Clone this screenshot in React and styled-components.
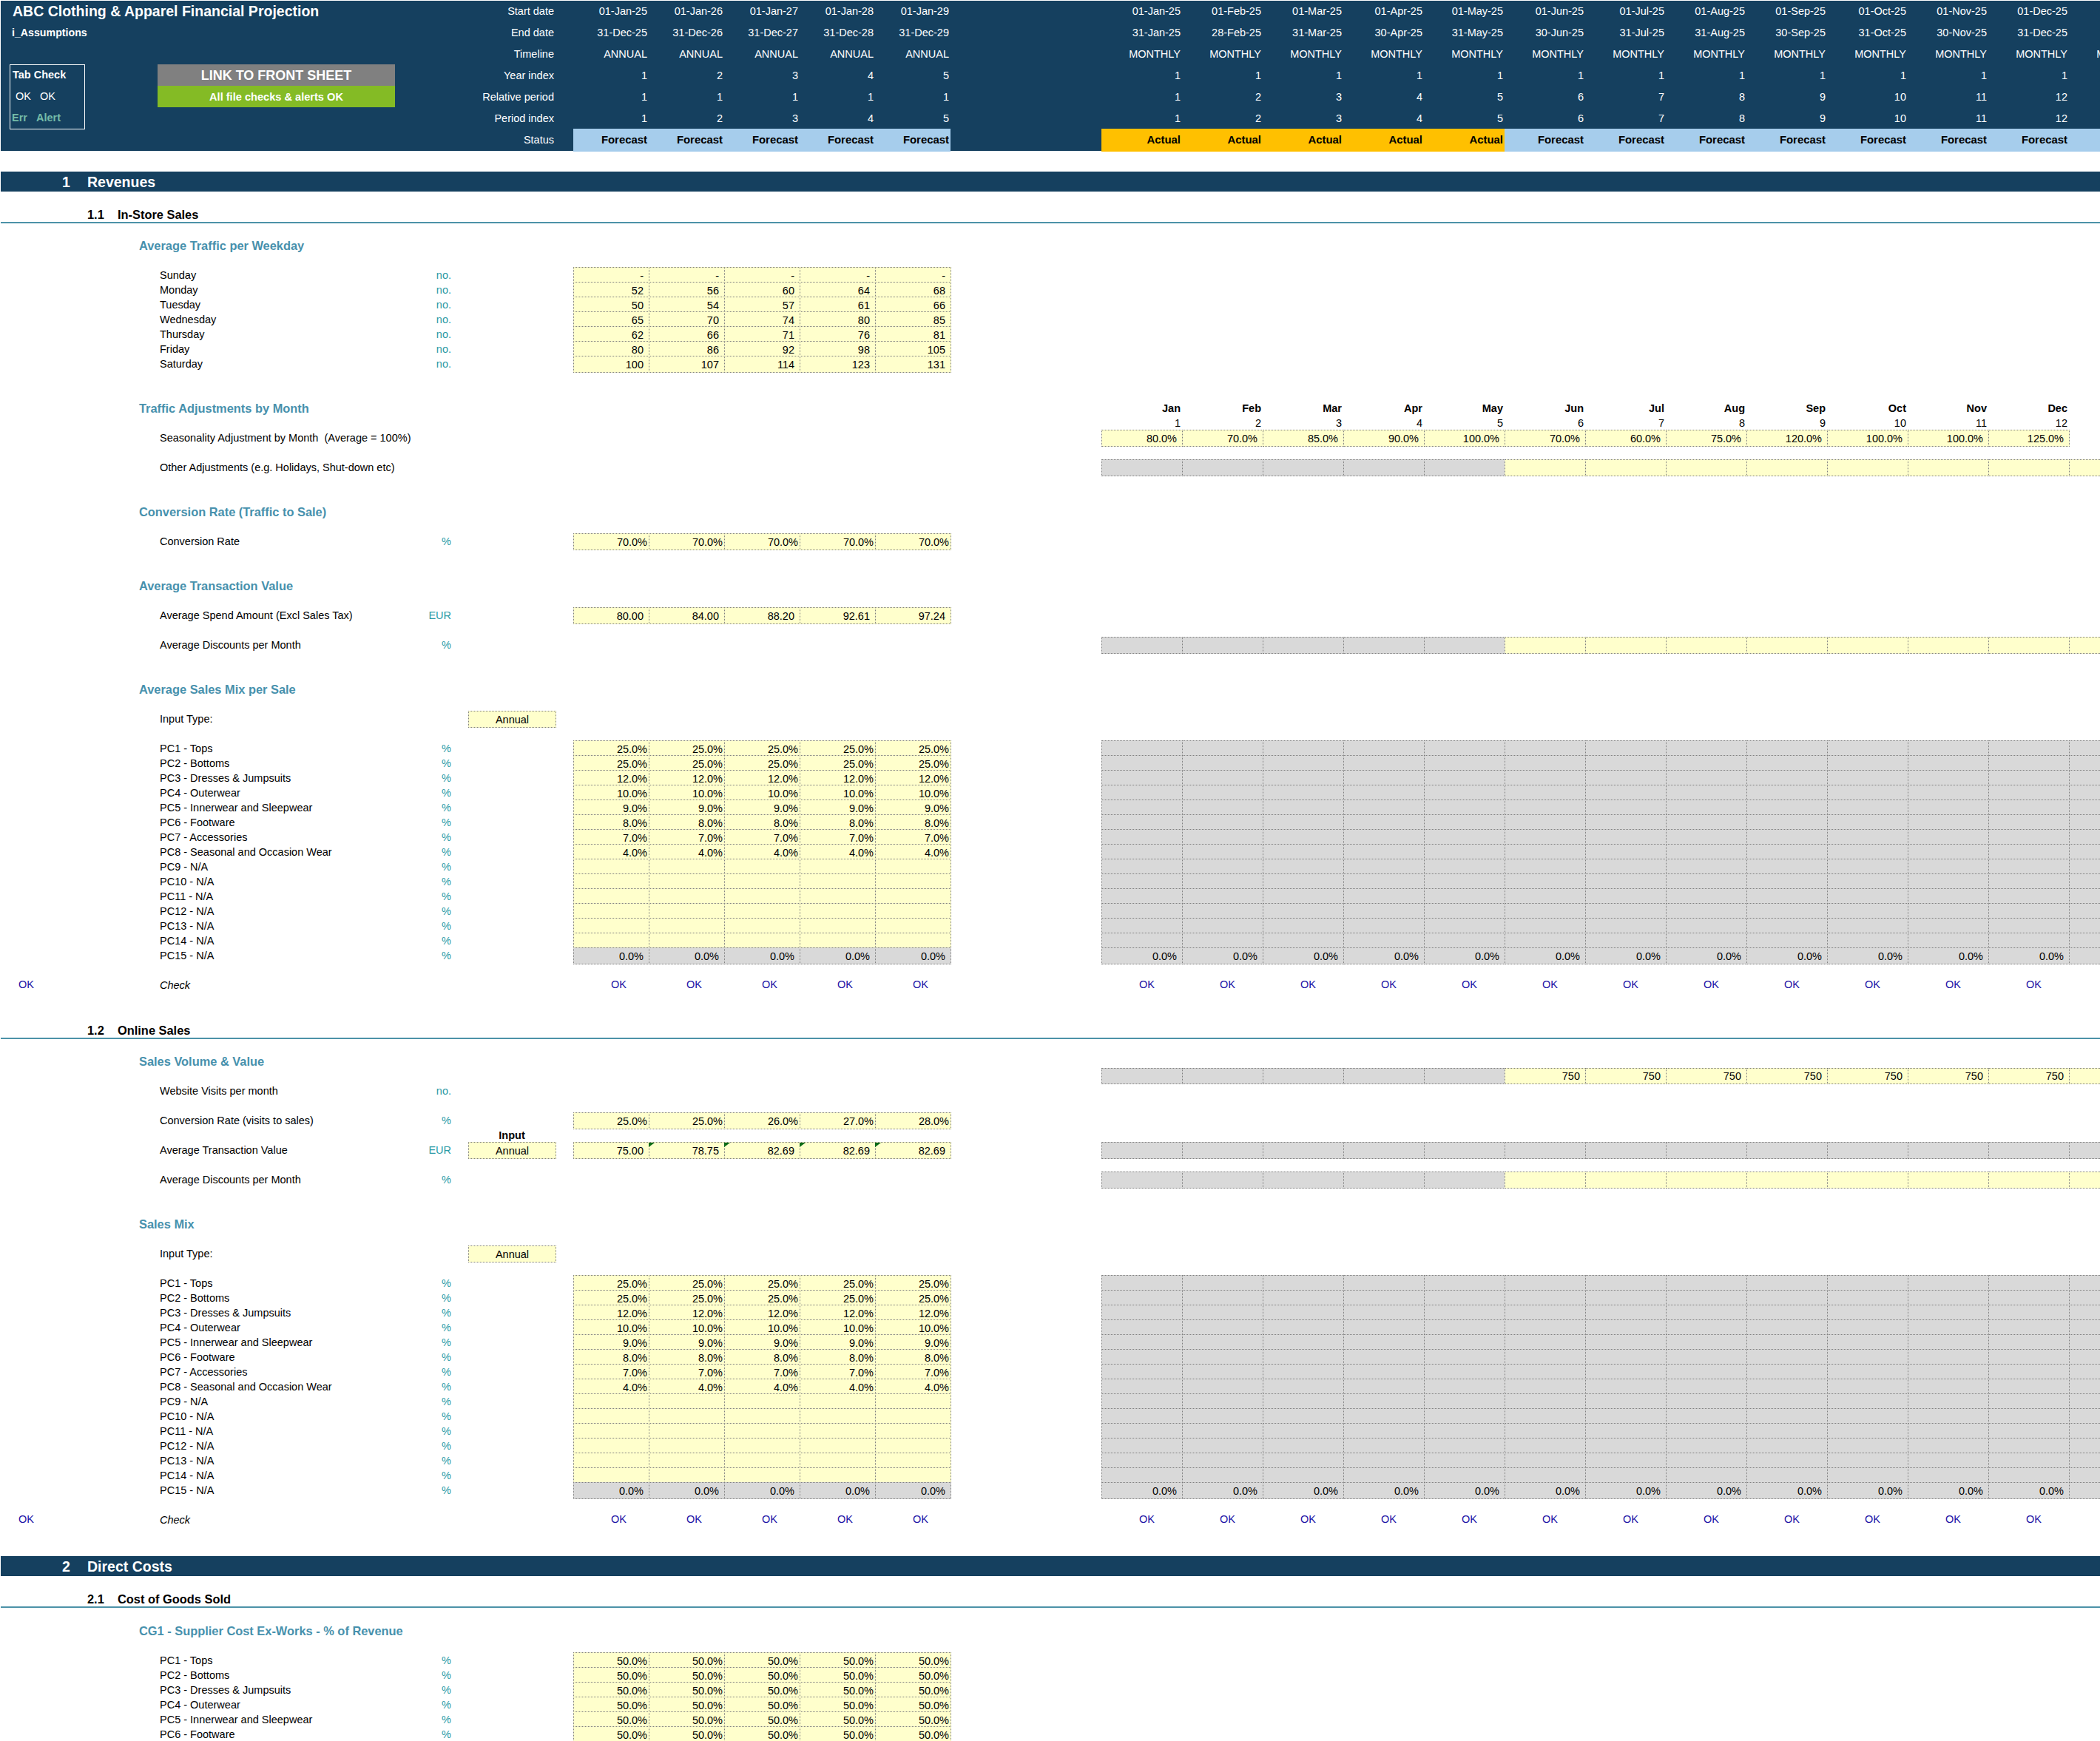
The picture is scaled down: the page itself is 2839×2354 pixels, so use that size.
import React from "react"
import styled, { createGlobalStyle } from "styled-components"

const NAVY = `#15405f`
const TEAL = `#4791ad`
const LINE = `#4c92a8`
const YELLOW = `#ffffcc`
const GREY = `#d9d9d9`

const GlobalStyle = createGlobalStyle`
  html, body {
    margin: 0;
    padding: 0;
    background: #fff;
  }
  body {
    font-family: "Liberation Sans", Arial, sans-serif;
    font-size: 14.5px;
    color: #000;
  }
`

const Page = styled.div`
  width: 2839px;
  height: 2354px;
  padding: 1px 0 0 1px;
  box-sizing: border-box;
  overflow: hidden;
`

const Header = styled.header`
  display: grid;
  grid-template-columns: 632px 2400px;
  width: 3032px;
  height: 203px;
  background: ${NAVY};
  color: #fff;
`

const BrandPane = styled.div`
  display: flex;
  flex-direction: column;
`

const Title = styled.div`
  height: 29px;
  line-height: 29px;
  padding-left: 16px;
  font-size: 19.5px;
  font-weight: 700;
  white-space: nowrap;
`

const SheetName = styled.div`
  height: 29px;
  line-height: 29px;
  padding-left: 15px;
  font-size: 14.2px;
  font-weight: 700;
`

const Controls = styled.div`
  display: flex;
  gap: 98px;
  margin-top: 28px;
  padding-left: 12px;
`

const TabBox = styled.div`
  display: grid;
  grid-template-columns: 33px 1fr;
  grid-auto-rows: 29px;
  align-items: start;
  box-sizing: border-box;
  width: 102px;
  height: 88px;
  padding-left: 2px;
  border: 1px solid #fff;
  line-height: 27px;
`

const TabTitle = styled.div`
  grid-column: 1 / 3;
  padding-left: 1px;
  font-weight: 700;
`

const TabOk = styled.div`
  padding-left: 5px;
`

const TabFlag = styled.div`
  color: #74bba8;
  font-weight: 700;
`

const LinkBlock = styled.div`
  display: flex;
  flex-direction: column;
  width: 321px;
  height: 58px;
  text-align: center;
  font-weight: 700;
`

const LinkButton = styled.div`
  height: 29px;
  line-height: 30px;
  background: #808080;
  font-size: 18px;
`

const CheckBanner = styled.div`
  height: 29px;
  line-height: 30px;
  background: #84bb25;
  font-size: 14.6px;
`

const TimelineRow = styled.div`
  display: grid;
  grid-template-columns: 118px 24px 510px 204px 1417px;
  height: 29px;
  line-height: 29px;
`

const TimelineLabel = styled.div`
  padding-right: 2px;
  text-align: right;
  white-space: nowrap;
`

const PeriodGroup = styled.div`
  display: grid;
  grid-column: ${({ $col }) => $col || `auto`};
  grid-template-columns: repeat(${({ $count }) => $count}, ${({ $width }) => $width}px);
`

// the status band starts a pixel above its row, as in the sheet
const PeriodValue = styled.div`
  padding-right: 2px;
  text-align: right;
  white-space: nowrap;
  ${({ $status }) => $status && `margin-top: -1px; line-height: 31px; font-weight: 700; font-size: 14.9px; color: #000;`}
  ${({ $status }) => $status === `Forecast` && `background: #a6cdec;`}
  ${({ $status }) => $status === `Actual` && `background: #ffc000;`}
`

const SectionBar = styled.div`
  display: flex;
  width: 2838px;
  height: 27px;
  line-height: 28px;
  background: ${NAVY};
  color: #fff;
  font-size: 19.5px;
  font-weight: 700;
`

const SectionNumber = styled.span`
  width: 34px;
  padding-left: 83px;
`

const SubBar = styled.div`
  display: flex;
  box-sizing: border-box;
  width: 2838px;
  height: 43px;
  padding-top: 21px;
  line-height: 20px;
  border-bottom: 2px solid ${LINE};
  font-size: 16.4px;
  font-weight: 700;
`

const SubNumber = styled.span`
  width: 41px;
  padding-left: 117px;
`

const Gap = styled.div`
  height: ${({ $h }) => $h}px;
`

const Row = styled.div`
  display: grid;
  grid-template-columns: 215px 294px 102px 21px 118px 24px 510px 204px 1417px;
  height: 20px;
  line-height: 22px;
`

const RowFlag = styled.div`
  padding-left: 24px;
  line-height: 20px;
  color: #2112a6;
`

const RowLabel = styled.div`
  white-space: nowrap;
  ${({ $italic }) => $italic && `font-style: italic;`}
`

const RowUnit = styled.div`
  padding-right: 2px;
  text-align: right;
  color: #2b9aa6;
`

const RowHeading = styled.div`
  grid-column: 1 / 3;
  padding-left: 187px;
  color: ${TEAL};
  font-size: 16.4px;
  font-weight: 700;
  white-space: nowrap;
`

const InputCaption = styled.div`
  grid-column: 5;
  text-align: center;
  font-weight: 700;
`

const CellGroup = styled.div`
  display: grid;
  grid-column: ${({ $col }) => $col};
  grid-template-columns: repeat(${({ $count }) => $count}, ${({ $width }) => $width}px);
`

const Cell = styled.div`
  position: relative;
  display: flex;
  align-items: center;
  justify-content: ${({ $center }) => ($center ? `center` : `flex-end`)};
  box-sizing: border-box;
  margin: 0 -1px -1px 0;
  padding-right: ${({ $tight, $center }) => ($center ? 0 : $tight ? 2 : 7)}px;
  border: 1px dotted #808080;
  background: ${({ $kind }) => ($kind === `grey` ? GREY : YELLOW)};
  line-height: 20px;
  ${({ $note }) =>
    $note &&
    `&::before {
      content: "";
      position: absolute;
      top: 0;
      left: -1px;
      border-top: 6px solid #0b6b16;
      border-right: 8px solid transparent;
    }`}
`

const PlainValue = styled.div`
  padding-right: 2px;
  text-align: right;
  ${({ $bold }) => $bold && `font-weight: 700;`}
`

const CheckMark = styled.div`
  padding-left: 51px;
  line-height: 20px;
  color: #2112a6;
`

const annualTimeline = [
  [`Start date`, [`01-Jan-25`, `01-Jan-26`, `01-Jan-27`, `01-Jan-28`, `01-Jan-29`]],
  [`End date`, [`31-Dec-25`, `31-Dec-26`, `31-Dec-27`, `31-Dec-28`, `31-Dec-29`]],
  [`Timeline`, Array(5).fill(`ANNUAL`)],
  [`Year index`, [1, 2, 3, 4, 5]],
  [`Relative period`, [1, 1, 1, 1, 1]],
  [`Period index`, [1, 2, 3, 4, 5]],
  [`Status`, Array(5).fill(`Forecast`)],
]

const MONTHS = [`Jan`, `Feb`, `Mar`, `Apr`, `May`, `Jun`, `Jul`, `Aug`, `Sep`, `Oct`, `Nov`, `Dec`]
const LAST_DAY = [31, 28, 31, 30, 31, 30, 31, 31, 30, 31, 30, 31]
const pad = n => String(n).padStart(2, `0`)
const twelve = [1, 2, 3, 4, 5, 6, 7, 8, 9, 10, 11, 12]

const monthlyTimeline = [
  MONTHS.map(m => `01-${m}-25`),
  MONTHS.map((m, i) => `${pad(LAST_DAY[i])}-${m}-25`),
  Array(13).fill(`MONTHLY`),
  Array(12).fill(1),
  twelve,
  twelve,
  [...Array(5).fill(`Actual`), ...Array(7).fill(`Forecast`), ``],
]

const weekdayRows = [
  [`Sunday`, [`-`, `-`, `-`, `-`, `-`]],
  [`Monday`, [52, 56, 60, 64, 68]],
  [`Tuesday`, [50, 54, 57, 61, 66]],
  [`Wednesday`, [65, 70, 74, 80, 85]],
  [`Thursday`, [62, 66, 71, 76, 81]],
  [`Friday`, [80, 86, 92, 98, 105]],
  [`Saturday`, [100, 107, 114, 123, 131]],
]

const PRODUCT_NAMES = [
  `PC1 - Tops`,
  `PC2 - Bottoms`,
  `PC3 - Dresses & Jumpsuits`,
  `PC4 - Outerwear`,
  `PC5 - Innerwear and Sleepwear`,
  `PC6 - Footware`,
  `PC7 - Accessories`,
  `PC8 - Seasonal and Occasion Wear`,
  `PC9 - N/A`,
  `PC10 - N/A`,
  `PC11 - N/A`,
  `PC12 - N/A`,
  `PC13 - N/A`,
  `PC14 - N/A`,
  `PC15 - N/A`,
]
const MIX = [`25.0%`, `25.0%`, `12.0%`, `10.0%`, `9.0%`, `8.0%`, `7.0%`, `4.0%`]
const SEASONALITY = [`80.0%`, `70.0%`, `85.0%`, `90.0%`, `100.0%`, `70.0%`, `60.0%`, `75.0%`, `120.0%`, `100.0%`, `100.0%`, `125.0%`]

const same = (count, value) => Array(count).fill(value)
const greyThenYellow = values =>
  same(13).map((_, i) => ({ kind: i < 5 ? `grey` : `yellow`, value: values && i >= 5 ? values[i - 5] : `` }))
const allGrey = same(13).map(() => ({ kind: `grey` }))

const Annual = ({ cells }) => (
  <CellGroup $col={7} $count={5} $width={102}>
    {cells.map((c, i) => (
      <Cell key={i} $kind={c.kind} $tight={c.tight} $note={c.note}>
        {c.value}
      </Cell>
    ))}
  </CellGroup>
)

const Monthly = ({ cells }) => (
  <CellGroup $col={9} $count={13} $width={109}>
    {cells.map((c, i) => (
      <Cell key={i} $kind={c.kind}>
        {c.value}
      </Cell>
    ))}
  </CellGroup>
)

const annualValues = (values, tight) => values.map(value => ({ value, tight }))

const Line = ({ label, unit, input, annual, monthly }) => (
  <Row>
    <div />
    <RowLabel>{label}</RowLabel>
    <RowUnit>{unit}</RowUnit>
    {input && (
      <CellGroup $col={5} $count={1} $width={118}>
        <Cell $center>{input}</Cell>
      </CellGroup>
    )}
    {annual && <Annual cells={annual} />}
    {monthly && <Monthly cells={monthly} />}
  </Row>
)

const Heading = ({ children, months }) => (
  <Row>
    <RowHeading>{children}</RowHeading>
    {months && (
      <PeriodGroup $col={9} $count={13} $width={109}>
        {MONTHS.map(m => (
          <PlainValue key={m} $bold>
            {m}
          </PlainValue>
        ))}
      </PeriodGroup>
    )}
  </Row>
)

const CheckLine = () => (
  <Row>
    <RowFlag>OK</RowFlag>
    <RowLabel $italic>Check</RowLabel>
    <PeriodGroup $col={7} $count={5} $width={102}>
      {same(5).map((_, i) => (
        <CheckMark key={i}>OK</CheckMark>
      ))}
    </PeriodGroup>
    <PeriodGroup $col={9} $count={13} $width={109}>
      {same(12).map((_, i) => (
        <CheckMark key={i}>OK</CheckMark>
      ))}
    </PeriodGroup>
  </Row>
)

const ProductMix = () =>
  PRODUCT_NAMES.map((name, i) => (
    <Line
      key={name}
      label={name}
      unit="%"
      annual={
        i === 14
          ? same(5).map(() => ({ kind: `grey`, value: `0.0%` }))
          : annualValues(same(5, MIX[i] || ``), true)
      }
      monthly={i === 14 ? allGrey.map((c, m) => ({ ...c, value: m < 12 ? `0.0%` : `` })) : allGrey}
    />
  ))

const App = () => (
  <Page>
    <GlobalStyle />
    <Header>
      <BrandPane>
        <Title>ABC Clothing &amp; Apparel Financial Projection</Title>
        <SheetName>i_Assumptions</SheetName>
        <Controls>
          <TabBox>
            <TabTitle>Tab Check</TabTitle>
            <TabOk>OK</TabOk>
            <TabOk>OK</TabOk>
            <TabFlag>Err</TabFlag>
            <TabFlag>Alert</TabFlag>
          </TabBox>
          <LinkBlock>
            <LinkButton>LINK TO FRONT SHEET</LinkButton>
            <CheckBanner>All file checks &amp; alerts OK</CheckBanner>
          </LinkBlock>
        </Controls>
      </BrandPane>
      <div>
        {annualTimeline.map(([label, values], r) => {
          const isStatus = label === `Status`
          return (
            <TimelineRow key={label}>
              <TimelineLabel>{label}</TimelineLabel>
              <div />
              <PeriodGroup $count={5} $width={102}>
                {values.map((v, i) => (
                  <PeriodValue key={i} $status={isStatus ? v : undefined}>
                    {v}
                  </PeriodValue>
                ))}
              </PeriodGroup>
              <div />
              <PeriodGroup $count={13} $width={109}>
                {monthlyTimeline[r].map((v, i) => (
                  <PeriodValue key={i} $status={isStatus ? v || `Forecast` : undefined}>
                    {v}
                  </PeriodValue>
                ))}
              </PeriodGroup>
            </TimelineRow>
          )
        })}
      </div>
    </Header>

    <Gap $h={28} />
    <SectionBar>
      <SectionNumber>1</SectionNumber>
      <span>Revenues</span>
    </SectionBar>
    <SubBar>
      <SubNumber>1.1</SubNumber>
      <span>In-Store Sales</span>
    </SubBar>

    <Gap $h={19} />
    <Heading>Average Traffic per Weekday</Heading>
    <Gap $h={20} />
    {weekdayRows.map(([label, values]) => (
      <Line key={label} label={label} unit="no." annual={annualValues(values)} />
    ))}

    <Gap $h={40} />
    <Heading months>Traffic Adjustments by Month</Heading>
    <Row>
      <PeriodGroup $col={9} $count={13} $width={109}>
        {twelve.map(n => (
          <PlainValue key={n}>{n}</PlainValue>
        ))}
      </PeriodGroup>
    </Row>
    <Row>
      <div />
      <RowLabel>Seasonality Adjustment by Month&nbsp; (Average = 100%)</RowLabel>
      <Monthly cells={SEASONALITY.map(value => ({ value }))} />
    </Row>
    <Gap $h={20} />
    <Line label="Other Adjustments (e.g. Holidays, Shut-down etc)" monthly={greyThenYellow()} />

    <Gap $h={40} />
    <Heading>Conversion Rate (Traffic to Sale)</Heading>
    <Gap $h={20} />
    <Line label="Conversion Rate" unit="%" annual={annualValues(same(5, `70.0%`), true)} />

    <Gap $h={40} />
    <Heading>Average Transaction Value</Heading>
    <Gap $h={20} />
    <Line
      label="Average Spend Amount (Excl Sales Tax)"
      unit="EUR"
      annual={annualValues([`80.00`, `84.00`, `88.20`, `92.61`, `97.24`])}
    />
    <Gap $h={20} />
    <Line label="Average Discounts per Month" unit="%" monthly={greyThenYellow()} />

    <Gap $h={40} />
    <Heading>Average Sales Mix per Sale</Heading>
    <Gap $h={20} />
    <Line label="Input Type:" input="Annual" />
    <Gap $h={20} />
    <ProductMix />
    <Gap $h={20} />
    <CheckLine />

    <Gap $h={21} />
    <SubBar>
      <SubNumber>1.2</SubNumber>
      <span>Online Sales</span>
    </SubBar>

    <Gap $h={19} />
    <Heading>Sales Volume &amp; Value</Heading>
    <Line monthly={greyThenYellow([750, 750, 750, 750, 750, 750, 750, ``])} />
    <Line label="Website Visits per month" unit="no." />
    <Gap $h={20} />
    <Line
      label="Conversion Rate (visits to sales)"
      unit="%"
      annual={annualValues([`25.0%`, `25.0%`, `26.0%`, `27.0%`, `28.0%`], true)}
    />
    <Row>
      <InputCaption>Input</InputCaption>
    </Row>
    <Line
      label="Average Transaction Value"
      unit="EUR"
      input="Annual"
      annual={[`75.00`, `78.75`, `82.69`, `82.69`, `82.69`].map((value, i) => ({ value, note: i > 0 }))}
      monthly={allGrey}
    />
    <Gap $h={20} />
    <Line label="Average Discounts per Month" unit="%" monthly={greyThenYellow()} />

    <Gap $h={40} />
    <Heading>Sales Mix</Heading>
    <Gap $h={20} />
    <Line label="Input Type:" input="Annual" />
    <Gap $h={20} />
    <ProductMix />
    <Gap $h={20} />
    <CheckLine />

    <Gap $h={40} />
    <SectionBar>
      <SectionNumber>2</SectionNumber>
      <span>Direct Costs</span>
    </SectionBar>
    <SubBar>
      <SubNumber>2.1</SubNumber>
      <span>Cost of Goods Sold</span>
    </SubBar>

    <Gap $h={20} />
    <Heading>CG1 - Supplier Cost Ex-Works - % of Revenue</Heading>
    <Gap $h={20} />
    {PRODUCT_NAMES.slice(0, 6).map(name => (
      <Line key={name} label={name} unit="%" annual={annualValues(same(5, `50.0%`), true)} />
    ))}
  </Page>
)

export default App
